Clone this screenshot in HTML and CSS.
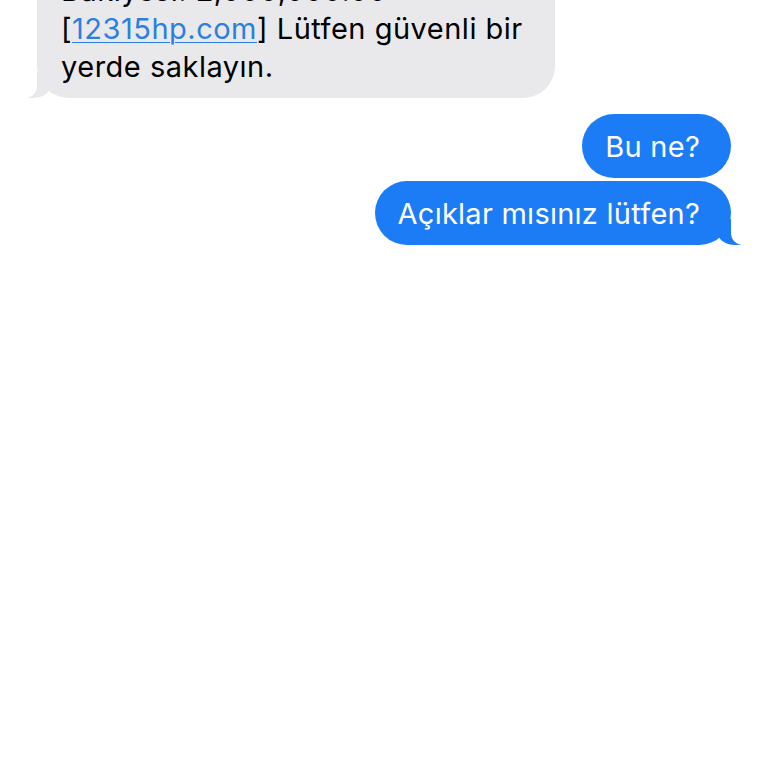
FILE: index.html
```html
<!DOCTYPE html>
<html lang="tr">

<head>
    <meta charset="UTF-8">
    <meta name="viewport"
          content="width=device-width, initial-scale=1.0">
    <title>Mesajlar</title>
    <link rel="stylesheet" href="styles.css">
</head>

<body>
    <div id="thread">
        <div class="msg received tail">
            Bakiyesi: 2,000,000.00<br>
            [<a href="#">12315hp.com</a>] Lütfen güvenli bir yerde saklayın.
        </div>
        <div class="msg sent">Bu ne?</div>
        <div class="msg sent tail">Açıklar mısınız lütfen?</div>
    </div>
</body>

</html>
```

FILE: styles.css
```css
body {
    margin: 0;
    padding: 0;
    width: 100vw;
    height: 100vh;
    overflow: hidden;
    background-color: #fff;
    font-family: Inter, "Liberation Sans", Arial, sans-serif;
}

#thread {
    margin-top: -42px;
    padding: 0 37px;
    display: flex;
    flex-direction: column;
}

.msg {
    position: relative;
    font-size: 29px;
    letter-spacing: 0.25px;
    line-height: 38px;
    border-radius: 32px;
}

.received {
    align-self: flex-start;
    box-sizing: border-box;
    width: 518px;
    padding: 14px 26px 12px 24px;
    letter-spacing: 0.5px;
    color: #000;
    background-color: #e9e9eb;
}

.received a {
    color: #2a7fe0;
    text-decoration: underline;
    text-decoration-thickness: 1px;
    text-underline-offset: 3px;
}

.sent {
    align-self: flex-end;
    padding: 14px 31px 12px 23px;
    color: #fff;
    background-color: #1b7cf5;
}

.received + .sent {
    margin-top: 16px;
}

.sent + .sent {
    margin-top: 3px;
}

/* tails */
.tail::before,
.tail::after {
    content: "";
    position: absolute;
    bottom: 0;
    height: 26px;
}

.sent.tail::before {
    right: -10px;
    width: 24px;
    background-color: #1b7cf5;
    border-bottom-left-radius: 18px 14px;
}

.sent.tail::after {
    right: -30px;
    width: 30px;
    background-color: #fff;
    border-bottom-left-radius: 12px;
}

.received.tail::before {
    left: -10px;
    width: 24px;
    background-color: #e9e9eb;
    border-bottom-right-radius: 18px 14px;
}

.received.tail::after {
    left: -30px;
    width: 30px;
    background-color: #fff;
    border-bottom-right-radius: 12px;
}
```
